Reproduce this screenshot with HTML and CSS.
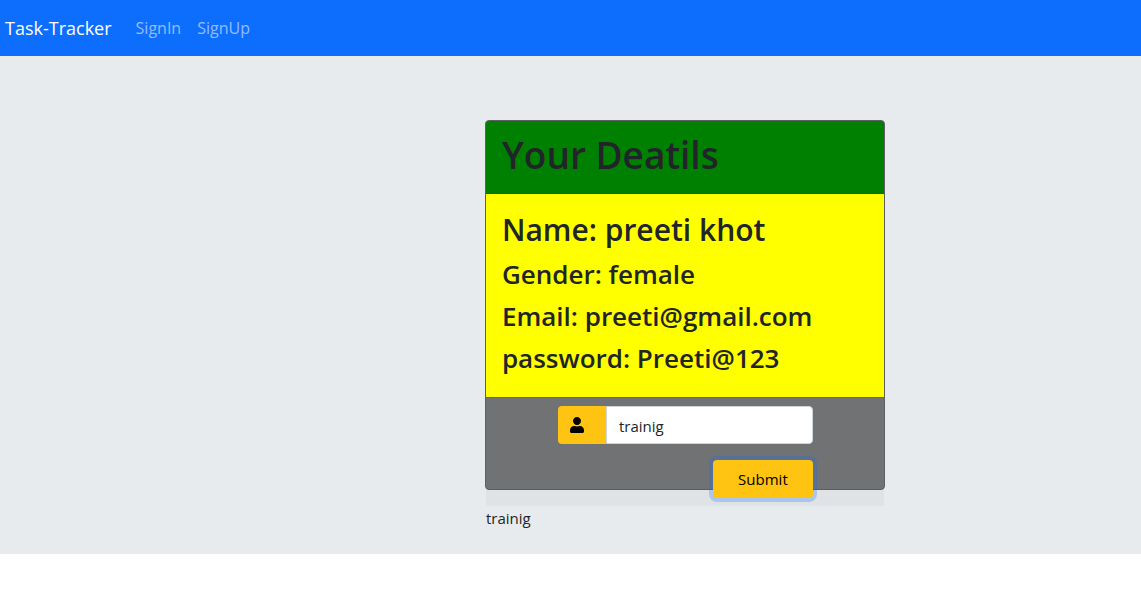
FILE: index.html
```html
<!DOCTYPE html>
<html lang="en">
<head>
<meta charset="utf-8">
<meta name="viewport" content="width=device-width, initial-scale=1">
<title>Task-Tracker</title>
<link rel="stylesheet" href="styles.css">
</head>
<body>
<nav class="navbar">
  <a class="brand" href="#">Task-Tracker</a>
  <a class="nav-link" href="#">SignIn</a>
  <a class="nav-link" href="#">SignUp</a>
</nav>
<main class="page">
  <section class="card">
    <header class="card-header"><h1 class="title">Your Deatils</h1></header>
    <div class="card-body">
      <h2 class="name">Name: preeti khot</h2>
      <h3 class="detail">Gender: female</h3>
      <h3 class="detail">Email: preeti@gmail.com</h3>
      <h3 class="detail">password: Preeti@123</h3>
    </div>
    <form class="card-footer">
      <div class="input-group">
        <label class="input-icon" for="task" aria-label="Task">
          <svg class="user-icon" viewBox="0 0 448 512" aria-hidden="true"><path d="M224 256c70.700 0 128-57.300 128-128S294.700 0 224 0 96 57.300 96 128s57.300 128 128 128zm89.600 32h-16.700c-22.200 10.200-46.900 16-72.900 16s-50.600-5.800-72.900-16h-16.700C60.200 288 0 348.200 0 422.400V464c0 26.500 21.500 48 48 48h352c26.500 0 48-21.500 48-48v-41.600c0-74.200-60.200-134.400-134.400-134.400z"/></svg>
        </label>
        <input class="input" id="task" type="text" value="trainig">
      </div>
      <button class="submit" type="button">Submit</button>
    </form>
    <p class="task">trainig</p>
  </section>
</main>
</body>
</html>
```
FILE: styles.css
```css
* {
  box-sizing: border-box;
}

body {
  margin: 0;
  background: #fff;
  color: #212529;
  font-family: "Segoe UI", "Open Sans", "Noto Sans", sans-serif;
  font-size: 15px;
  line-height: 24px;
}

.navbar {
  display: flex;
  align-items: center;
  min-height: 56px;
  padding: 0 5px;
  background: #0d6efd;
}

.brand {
  margin-right: 16px;
  color: #fff;
  font-size: 18px;
  text-decoration: none;
}

.nav-link {
  padding: 8px;
  color: rgba(255, 255, 255, 0.55);
  font-size: 16px;
  text-decoration: none;
}

.page {
  padding: 64px 0;
  background: #e7ebee;
}

/* The footer and the task list run past the fixed card height. */
.card {
  width: 400px;
  height: 370px;
  margin-left: 42.5%;
  border: 1px solid #5d5f61;
  border-radius: 4px;
  background: #747678;
}

.card-header {
  padding: 10px 16px 14px;
  border-bottom: 1px solid #007000;
  border-radius: 3px 3px 0 0;
  background: green;
}

.title,
.name,
.detail {
  margin: 0;
  font-weight: 600;
  white-space: nowrap;
}

.title {
  font-size: 37px;
  line-height: 48px;
}

.card-body {
  display: grid;
  gap: 8px;
  padding: 16px 16px 22px;
  background: yellow;
}

.name {
  font-size: 30px;
  line-height: 39px;
}

.detail {
  font-size: 26px;
  line-height: 34px;
}

.card-footer {
  display: flex;
  flex-direction: column;
  gap: 16px;
  padding: 8px 71px 8px 72px;
  border-top: 1px solid rgba(0, 0, 0, 0.125);
  border-radius: 0 0 3px 3px;
  background: rgba(0, 0, 0, 0.03);
}

.input-group {
  display: flex;
  height: 38px;
}

.input-icon {
  display: flex;
  align-items: center;
  width: 48px;
  padding: 0 12px;
  border-radius: 4px 0 0 4px;
  background: #ffc312;
}

.user-icon {
  width: 14px;
  height: 16px;
  fill: #000;
}

.input {
  flex: 1;
  min-width: 0;
  padding: 8px 12px 6px;
  border: 1px solid #ced4da;
  border-radius: 0 4px 4px 0;
  background: #fff;
  color: #212529;
  font: inherit;
}

.submit {
  align-self: flex-end;
  width: 100px;
  height: 38px;
  padding: 0;
  border: 0;
  border-radius: 4px;
  background: #ffc312;
  box-shadow: 0 0 0 4px rgba(13, 110, 253, 0.25);
  color: #000;
  font: inherit;
}

.task {
  margin: 0;
}
```
